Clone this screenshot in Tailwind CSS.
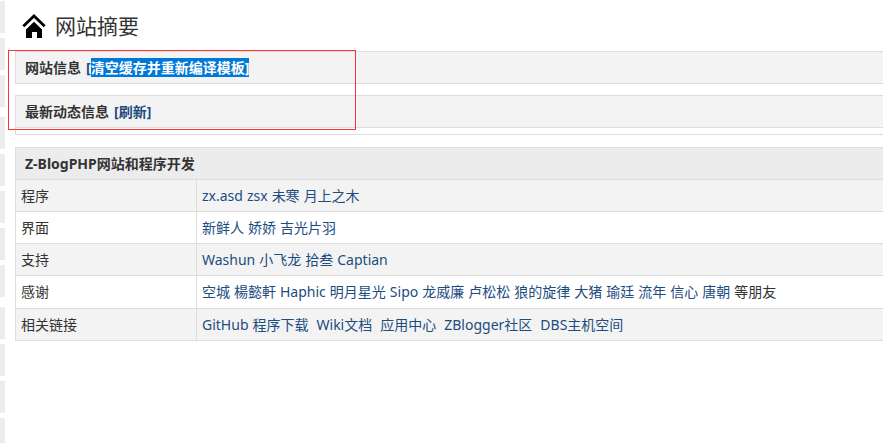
<!DOCTYPE html>
<html lang="zh-CN">
<head>
    <meta charset="UTF-8">
    <meta name="viewport" content="width=device-width, initial-scale=1.0">
    <title>网站摘要</title>
    <script src="https://cdn.jsdelivr.net/npm/@tailwindcss/browser@4"></script>
</head>
<body class="bg-white text-[#333] text-sm leading-5 font-['Noto_Sans','Noto_Sans_CJK_SC',sans-serif]">
    <div class="flex h-screen overflow-hidden">
        <!-- Collapsed side menu -->
        <aside class="w-[5px] shrink-0 pt-px flex flex-col gap-[10px]">
            <div class="flex flex-col gap-[5px]">
                <div class="h-8 bg-[#ececec]"></div>
                <div class="h-8 bg-[#ececec]"></div>
                <div class="h-8 bg-[#ececec]"></div>
            </div>
            <div class="flex flex-col gap-[5px]">
                <div class="h-8 bg-[#ececec]"></div>
                <div class="h-8 bg-[#ececec]"></div>
                <div class="h-8 bg-[#ececec]"></div>
                <div class="h-8 bg-[#ececec]"></div>
                <div class="h-8 bg-[#ececec]"></div>
            </div>
            <div class="flex flex-col gap-[5px]">
                <div class="h-8 bg-[#ececec]"></div>
                <div class="h-8 bg-[#ececec]"></div>
                <div class="h-8 bg-[#ececec]"></div>
                <div class="h-8 bg-[#ececec]"></div>
            </div>
        </aside>

        <!-- Main content -->
        <main class="relative flex-1 min-w-0 pl-[10px]">
            <header class="flex items-center gap-[9px] h-[51px] pl-[7px]">
                <svg class="w-6 h-6" viewBox="0 0 24 24" aria-hidden="true">
                    <path d="M1.300 12.300 12 2l10.700 10.300" fill="none" stroke="#000" stroke-width="2.800"/>
                    <path d="M12 7.800 20 15.500V24h-5v-6h-5v6H4v-8.500z" fill="#000"/>
                </svg>
                <h1 class="text-[21px] leading-7">网站摘要</h1>
            </header>

            <table class="w-full border-collapse border-y border-l border-[#ddd] mb-[11px]">
                <tr class="bg-[#f3f3f3]">
                    <th class="h-8 pl-[9px] text-left font-bold"><div class="flex gap-[5px]">网站信息 <a href="#" class="text-[#1d4c7f]">[<span class="bg-[#0078d7] text-white">清空缓存并重新编译模板]</span></a></div></th>
                </tr>
            </table>

            <table class="w-full border-collapse border-y border-l border-[#ddd] mb-3">
                <tr class="bg-[#f3f3f3]">
                    <th class="h-8 pl-[9px] text-left font-bold"><div class="flex gap-[5px]">最新动态信息 <a href="#" class="text-[#1d4c7f]">[刷新]</a></div></th>
                </tr>
                <tr>
                    <td class="h-[7px] p-0 border-t border-[#ddd]"></td>
                </tr>
            </table>

            <table class="w-full table-fixed border-collapse border-y border-l border-[#ddd]">
                <colgroup>
                    <col class="w-[181px]">
                    <col>
                </colgroup>
                <tr class="bg-[#ececec]">
                    <th colspan="2" class="h-8 pl-[9px] text-left font-bold">Z-BlogPHP网站和程序开发</th>
                </tr>
                <tr class="bg-[#f3f3f3] border-t border-[#ddd]">
                    <td class="h-8 pl-[5px] border-r border-[#ddd]">程序</td>
                    <td class="pl-[5px] text-[#1d4c7f] whitespace-nowrap">
                        <div class="flex gap-1"><a href="#">zx.asd</a> <a href="#">zsx</a> <a href="#">未寒</a> <a href="#">月上之木</a></div>
                    </td>
                </tr>
                <tr class="border-t border-[#ddd]">
                    <td class="h-8 pl-[5px] border-r border-[#ddd]">界面</td>
                    <td class="pl-[5px] text-[#1d4c7f] whitespace-nowrap">
                        <div class="flex gap-1"><a href="#">新鲜人</a> <a href="#">娇娇</a> <a href="#">吉光片羽</a></div>
                    </td>
                </tr>
                <tr class="bg-[#f3f3f3] border-t border-[#ddd]">
                    <td class="h-8 pl-[5px] border-r border-[#ddd]">支持</td>
                    <td class="pl-[5px] text-[#1d4c7f] whitespace-nowrap">
                        <div class="flex gap-1"><a href="#">Washun</a> <a href="#">小飞龙</a> <a href="#">拾叁</a> <a href="#">Captian</a></div>
                    </td>
                </tr>
                <tr class="border-t border-[#ddd]">
                    <td class="h-[33px] pl-[5px] border-r border-[#ddd]">感谢</td>
                    <td class="pl-[5px] text-[#1d4c7f] whitespace-nowrap">
                        <div class="flex gap-1"><a href="#">空城</a> <a href="#">楊懿軒</a> <a href="#">Haphic</a> <a href="#">明月星光</a> <a href="#">Sipo</a> <a href="#">龙威廉</a> <a href="#">卢松松</a> <a href="#">狼的旋律</a> <a href="#">大猪</a> <a href="#">瑜廷</a> <a href="#">流年</a> <a href="#">信心</a> <a href="#">唐朝</a> <span class="text-[#333]">等朋友</span></div>
                    </td>
                </tr>
                <tr class="bg-[#f3f3f3] border-t border-[#ddd]">
                    <td class="h-8 pl-[5px] border-r border-[#ddd]">相关链接</td>
                    <td class="pl-[5px] text-[#1d4c7f] whitespace-nowrap">
                        <div class="flex gap-2">
                            <div class="flex gap-1"><a href="#">GitHub</a> <a href="#">程序下载</a></div>
                            <a href="#">Wiki文档</a>
                            <a href="#">应用中心</a>
                            <a href="#">ZBlogger社区</a>
                            <a href="#">DBS主机空间</a>
                        </div>
                    </td>
                </tr>
            </table>

            <!-- Highlight frame -->
            <div class="absolute left-[3px] top-[50px] w-[348px] h-20 border border-[#f33] pointer-events-none"></div>
        </main>
    </div>
</body>
</html>
